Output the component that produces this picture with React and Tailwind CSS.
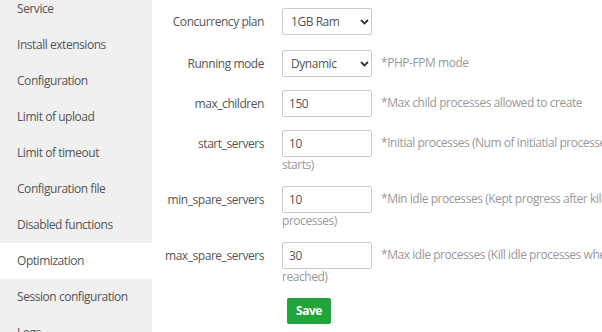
import React from "react";

const menu = [
  "Service",
  "Install extensions",
  "Configuration",
  "Limit of upload",
  "Limit of timeout",
  "Configuration file",
  "Disabled functions",
  "Optimization",
  "Session configuration",
  "Logs",
];

function Chevron() {
  return (
    <svg
      className="absolute right-[3px] top-1/2 -translate-y-1/2 pointer-events-none"
      width="9"
      height="6"
      viewBox="0 0 9 6"
    >
      <path d="M1 1 L4.5 4.5 L8 1" fill="none" stroke="#333" strokeWidth="1.8" />
    </svg>
  );
}

function Select({ value }) {
  return (
    <div className="relative inline-block align-middle w-[90px] h-[27px]">
      <select
        defaultValue={value}
        className="appearance-none w-full h-full border border-[#cccccc] rounded-[2px] bg-white pl-[8px] text-[12px] tracking-[-0.45px] text-[#555] outline-none"
      >
        <option>{value}</option>
      </select>
      <Chevron />
    </div>
  );
}

function Input({ value }) {
  return (
    <input
      defaultValue={value}
      className="inline-block align-middle w-[90px] h-[27px] border border-[#cccccc] rounded-[2px] bg-white px-[6px] text-[12px] tracking-[-0.45px] text-[#555] outline-none"
    />
  );
}

function Row({ label, children, desc, mb = "mb-[13px]" }) {
  return (
    <div className={`flex items-start ${mb}`}>
      <div className="w-[112px] h-[27px] shrink-0 flex items-center justify-end text-[12px] text-[#555]">
        {label}
      </div>
      <div className="ml-[18px] w-[392px] shrink-0 text-[12px] leading-[16px] text-[#999]">
        {children}
        {desc && <span className="ml-[9px]">{desc}</span>}
      </div>
    </div>
  );
}

export default function App() {
  return (
    <div className="flex w-[602px] h-[332px] overflow-hidden bg-white font-['Open_Sans',sans-serif] tracking-[-0.45px]">
      <div className="w-[152px] shrink-0 bg-[#f0f0f0]">
        <div className="-mt-[9px]">
          {menu.map((m) => (
            <div
              key={m}
              className={`h-[36px] flex items-center pl-[17px] text-[12px] text-[#555] ${
                m === "Optimization" ? "bg-white" : ""
              }`}
            >
              {m}
            </div>
          ))}
        </div>
      </div>
      <div className="flex-1 pt-[8px]">
        <Row label="Concurrency plan" mb="mb-[15px]">
          <Select value="1GB Ram" />
        </Row>
        <Row label="Running mode" desc="*PHP-FPM mode">
          <Select value="Dynamic" />
        </Row>
        <Row label="max_children" desc="*Max child processes allowed to create">
          <Input value="150" />
        </Row>
        <Row
          label="start_servers"
          desc="*Initial processes (Num of initiatial processes when fpm starts)"
        >
          <Input value="10" />
        </Row>
        <Row
          label="min_spare_servers"
          desc="*Min idle processes (Kept progress after kill idle processes)"
        >
          <Input value="10" />
        </Row>
        <Row
          label="max_spare_servers"
          desc="*Max idle processes (Kill idle processes when the limit is reached)"
        >
          <Input value="30" />
        </Row>
        <div className="flex">
          <button className="ml-[135px] w-[44px] h-[26px] rounded-[2px] bg-[#20a53a] text-white text-[12px] font-bold">
            Save
          </button>
        </div>
      </div>
    </div>
  );
}
